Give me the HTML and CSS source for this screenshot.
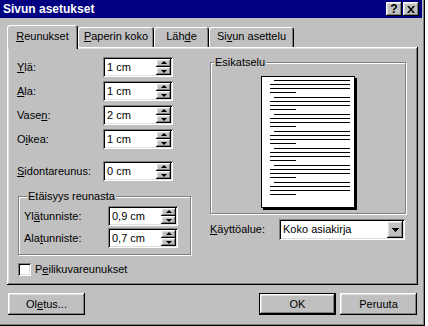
FILE: index.html
```html
<!DOCTYPE html>
<html lang="fi">
<head>
    <meta charset="UTF-8">
    <title>Sivun asetukset</title>
    <link rel="stylesheet" href="styles.css">
</head>
<body>
    <div class="dialog">
        <div class="titlebar">
            <span class="title">Sivun asetukset</span>
            <span class="cap-btn help">?</span>
            <span class="cap-btn close">
                <svg width="8" height="7" viewBox="0 0 8 7"><path d="M0 0h2l2 2.5L6 0h2L5 3.5 8 7H6L4 4.5 2 7H0l3-3.5z" fill="#000"/></svg>
            </span>
        </div>

        <div class="tabs">
            <div class="tab active tab-margins"><u>R</u>eunukset</div>
            <div class="tab tab-paper"><u>P</u>aperin koko</div>
            <div class="tab tab-source">Läh<u>d</u>e</div>
            <div class="tab tab-layout">Si<u>v</u>un asettelu</div>
        </div>

        <div class="panel">
            <div class="margins">
                <div class="field">
                    <label><u>Y</u>lä:</label>
                    <div class="spin"><span class="val">1 cm</span><span class="spin-btns"><span class="spin-up"></span><span class="spin-down"></span></span></div>
                </div>
                <div class="field">
                    <label><u>A</u>la:</label>
                    <div class="spin"><span class="val">1 cm</span><span class="spin-btns"><span class="spin-up"></span><span class="spin-down"></span></span></div>
                </div>
                <div class="field">
                    <label>Vase<u>n</u>:</label>
                    <div class="spin"><span class="val">2 cm</span><span class="spin-btns"><span class="spin-up"></span><span class="spin-down"></span></span></div>
                </div>
                <div class="field">
                    <label>O<u>i</u>kea:</label>
                    <div class="spin"><span class="val">1 cm</span><span class="spin-btns"><span class="spin-up"></span><span class="spin-down"></span></span></div>
                </div>
                <div class="field gutter">
                    <label><u>S</u>idontareunus:</label>
                    <div class="spin"><span class="val">0 cm</span><span class="spin-btns"><span class="spin-up"></span><span class="spin-down"></span></span></div>
                </div>

                <fieldset class="group distance">
                    <legend>Etäisyys reunasta</legend>
                    <div class="field">
                        <label>Yl<u>ä</u>tunniste:</label>
                        <div class="spin"><span class="val">0,9 cm</span><span class="spin-btns"><span class="spin-up"></span><span class="spin-down"></span></span></div>
                    </div>
                    <div class="field">
                        <label>Ala<u>t</u>unniste:</label>
                        <div class="spin"><span class="val">0,7 cm</span><span class="spin-btns"><span class="spin-up"></span><span class="spin-down"></span></span></div>
                    </div>
                </fieldset>

                <div class="check">
                    <span class="box"></span>
                    <span>P<u>e</u>ilikuvareunukset</span>
                </div>
            </div>

            <div class="preview-col">
                <fieldset class="group preview">
                    <legend>Esikatselu</legend>
                    <div class="page">
                        <div class="para"><div class="ln first"></div><div class="ln"></div><div class="ln"></div><div class="ln short"></div></div>
                        <div class="para"><div class="ln first"></div><div class="ln"></div><div class="ln"></div><div class="ln short"></div></div>
                        <div class="para"><div class="ln first"></div><div class="ln"></div><div class="ln"></div><div class="ln short"></div></div>
                        <div class="para"><div class="ln first"></div><div class="ln"></div><div class="ln"></div><div class="ln short"></div></div>
                        <div class="para"><div class="ln first"></div><div class="ln"></div><div class="ln"></div><div class="ln short"></div></div>
                        <div class="para"><div class="ln first"></div><div class="ln"></div><div class="ln"></div><div class="ln short"></div></div>
                        <div class="para"><div class="ln first"></div><div class="ln"></div><div class="ln"></div><div class="ln short"></div></div>
                    </div>
                </fieldset>

                <div class="apply">
                    <label><u>K</u>äyttöalue:</label>
                    <div class="combo">
                        <span class="val">Koko asiakirja</span>
                        <span class="drop">
                            <svg width="7" height="4" viewBox="0 0 7 4"><path d="M0 0h7v1H0zM1 1h5v1H1zM2 2h3v1H2zM3 3h1v1H3z" fill="#000"/></svg>
                        </span>
                    </div>
                </div>
            </div>
        </div>

        <div class="buttons">
            <button class="btn">Ol<u>e</u>tus...</button>
            <span class="spacer"></span>
            <button class="btn default">OK</button>
            <button class="btn">Peruuta</button>
        </div>
    </div>
</body>
</html>
```

FILE: styles.css
```css
* {
    margin: 0;
    padding: 0;
    box-sizing: border-box;
}
body {
    background: #fff;
    font-family: "Liberation Sans", Arial, sans-serif;
    font-size: 11px;
    line-height: 13px;
    color: #000;
}
u {
    text-decoration: underline;
    text-underline-offset: 1px;
}
.dialog {
    width: 425px;
    height: 326px;
    background: #c0c0c0;
    padding: 0 3px 3px 0;
    box-shadow: inset -1px -1px #000, inset -2px -2px #808080;
}

/* title bar */
.titlebar {
    height: 18px;
    background: #000080;
    color: #fff;
    display: flex;
    align-items: center;
    padding: 0 3px 0 3px;
}
.title {
    flex: 1;
    font-weight: bold;
    font-size: 12px;
}
.cap-btn {
    width: 16px;
    height: 14px;
    display: flex;
    align-items: center;
    justify-content: center;
    background: #c0c0c0;
    color: #000;
    box-shadow: inset -1px -1px #000, inset 1px 1px #fff, inset -2px -2px #808080, inset 2px 2px #dfdfdf;
}
.cap-btn.help {
    margin-right: 1px;
    font-weight: bold;
    font-size: 12px;
}

/* tabs */
.tabs {
    display: flex;
    align-items: flex-end;
    margin-top: 7px;
    padding-left: 7px;
}
.tab {
    height: 20px;
    padding-top: 3px;
    text-align: center;
    border-radius: 3px 3px 0 0;
    background: #c0c0c0;
    box-shadow: inset 1px 1px #fff, inset -1px 0 #000, inset -2px 0 #808080;
}
.tab.active {
    position: relative;
    z-index: 1;
    height: 24px;
    margin-bottom: -2px;
    padding-top: 5px;
}
.tab-margins { width: 71px; }
.tab-paper { width: 76px; }
.tab-source { width: 55px; }
.tab-layout { width: 85px; }

/* panel */
.panel {
    display: flex;
    width: 411px;
    height: 238px;
    margin-left: 7px;
    padding: 10px 0 0 10px;
    box-shadow: inset -1px -1px #000, inset 1px 1px #fff, inset -2px -2px #808080, inset 2px 2px #dfdfdf;
}
.margins {
    width: 176px;
    display: flex;
    flex-direction: column;
}
.field {
    display: flex;
    align-items: center;
    height: 20px;
    margin-bottom: 4px;
}
.field label {
    width: 86px;
}
.field.gutter {
    margin-top: 8px;
}
.spin {
    width: 70px;
    height: 20px;
    display: flex;
    padding: 2px;
    background: #fff;
    box-shadow: inset 1px 1px #808080, inset -1px -1px #fff, inset 2px 2px #000, inset -2px -2px #dfdfdf;
}
.val {
    flex: 1;
    padding-left: 2px;
    line-height: 16px;
}
.spin-btns {
    width: 15px;
    display: flex;
    flex-direction: column;
}
.spin-btns span {
    flex: 1;
    background: #c0c0c0;
    box-shadow: inset -1px -1px #000, inset 1px 1px #fff, inset -2px -2px #808080, inset 2px 2px #dfdfdf;
    position: relative;
}
.spin-btns span::after {
    content: "";
    position: absolute;
    left: 5px;
    width: 0;
    height: 0;
    border-left: 3px solid transparent;
    border-right: 3px solid transparent;
}
.spin-up::after {
    top: 2px;
    border-bottom: 3px solid #000;
}
.spin-down::after {
    top: 3px;
    border-top: 3px solid #000;
}

/* group boxes */
.group {
    border: 1px solid #808080;
    box-shadow: 1px 1px 0 #fff, inset 1px 1px 0 #fff;
}
.group legend {
    margin-left: 3px;
    padding: 0 1px;
    background: #c0c0c0;
}
.distance {
    width: 173px;
    margin: 5px 0 0 1px;
    padding: 3px 0 4px 5px;
}
.distance .field {
    margin-bottom: 2px;
}
.distance .field label {
    width: 84px;
}
.check {
    display: flex;
    align-items: center;
    gap: 4px;
    margin: 8px 0 0 1px;
}
.check .box {
    width: 13px;
    height: 13px;
    background: #fff;
    box-shadow: inset 1px 1px #808080, inset -1px -1px #fff, inset 2px 2px #000, inset -2px -2px #dfdfdf;
}

/* preview */
.preview-col {
    margin-left: 17px;
    width: 196px;
}
.preview {
    margin-top: -1px;
    height: 158px;
    display: flex;
    justify-content: center;
    padding-top: 7px;
}
.page {
    width: 94px;
    height: 132px;
    background: #fff;
    border: 1px solid #000;
    box-shadow: 2px 2px 0 #000;
    padding: 3px 0 0 8px;
    overflow: hidden;
}
.para {
    margin-bottom: 4px;
}
.ln {
    width: 80px;
    height: 1px;
    margin-bottom: 3px;
    background: #000;
}
.ln.first {
    width: 76px;
    margin-left: 4px;
}
.ln.short {
    width: 26px;
}
.apply {
    display: flex;
    align-items: center;
    margin-top: 5px;
}
.apply label {
    width: 69px;
}
.combo {
    width: 126px;
    height: 21px;
    display: flex;
    padding: 2px;
    background: #fff;
    box-shadow: inset 1px 1px #808080, inset -1px -1px #fff, inset 2px 2px #000, inset -2px -2px #dfdfdf;
}
.combo .val {
    line-height: 17px;
}
.drop {
    width: 16px;
    display: flex;
    align-items: center;
    justify-content: center;
    background: #c0c0c0;
    box-shadow: inset -1px -1px #000, inset 1px 1px #fff, inset -2px -2px #808080, inset 2px 2px #dfdfdf;
}

/* buttons */
.buttons {
    display: flex;
    gap: 4px;
    margin-top: 8px;
    padding: 0 5px 0 8px;
}
.spacer {
    flex: 1;
}
.btn {
    width: 77px;
    height: 22px;
    border: none;
    background: #c0c0c0;
    font: inherit;
    color: #000;
    box-shadow: inset -1px -1px #000, inset 1px 1px #fff, inset -2px -2px #808080, inset 2px 2px #dfdfdf;
}
.btn.default {
    box-shadow: inset 0 0 0 1px #000, inset -2px -2px #000, inset 2px 2px #fff, inset -3px -3px #808080, inset 3px 3px #dfdfdf;
}
```
